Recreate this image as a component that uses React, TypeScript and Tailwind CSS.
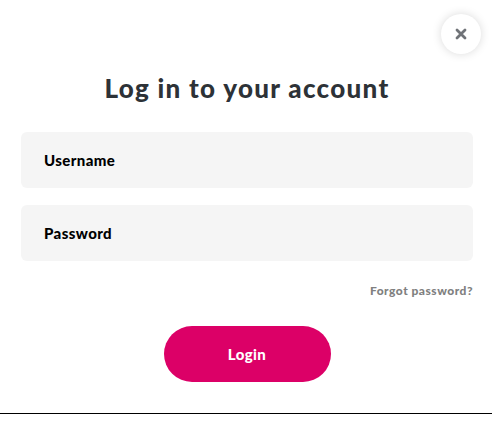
import React from "react";

export default function App() {
  return (
    <div className="relative w-[492px] h-[440px] bg-white overflow-hidden" style={{ fontFamily: "Lato, 'Open Sans', sans-serif" }}>
      <button className="absolute top-[14px] left-[441px] w-10 h-10 rounded-full bg-white shadow-[0_0_10px_rgba(0,0,0,0.15)] flex items-center justify-center">
        <svg width="12" height="12" viewBox="0 0 12 12">
          <path d="M2 2 L10 10 M10 2 L2 10" stroke="#707378" strokeWidth="2.8" strokeLinecap="round" />
        </svg>
      </button>
      <div className="flex flex-col pl-[21px] pr-[19px] pt-[72px]">
        <h1 className="text-center text-[26px] leading-[32px] font-black text-[#2d3237] tracking-[1.3px]">Log in to your account</h1>
        <div className="mt-[28px] flex flex-col gap-[17px]">
          <div className="h-[56px] rounded-[6px] bg-[#f5f5f5] flex items-center px-[23px]">
            <span className="text-[15px] font-black text-black tracking-[0.4px]">Username</span>
          </div>
          <div className="h-[56px] rounded-[6px] bg-[#f5f5f5] flex items-center px-[23px]">
            <span className="text-[15px] font-black text-black tracking-[0.4px]">Password</span>
          </div>
        </div>
        <div className="mt-[23px] flex justify-end">
          <span className="text-[12px] leading-[14px] font-black text-[#808080] tracking-[0.5px]">Forgot password?</span>
        </div>
        <div className="mt-[28px] flex justify-center">
          <button className="w-[167px] h-[56px] rounded-full bg-[#dc0067] text-white text-[15px] font-black tracking-[0.4px]">Login</button>
        </div>
      </div>
      <div className="absolute left-0 right-0 top-[413px] border-t border-black" />
    </div>
  );
}
